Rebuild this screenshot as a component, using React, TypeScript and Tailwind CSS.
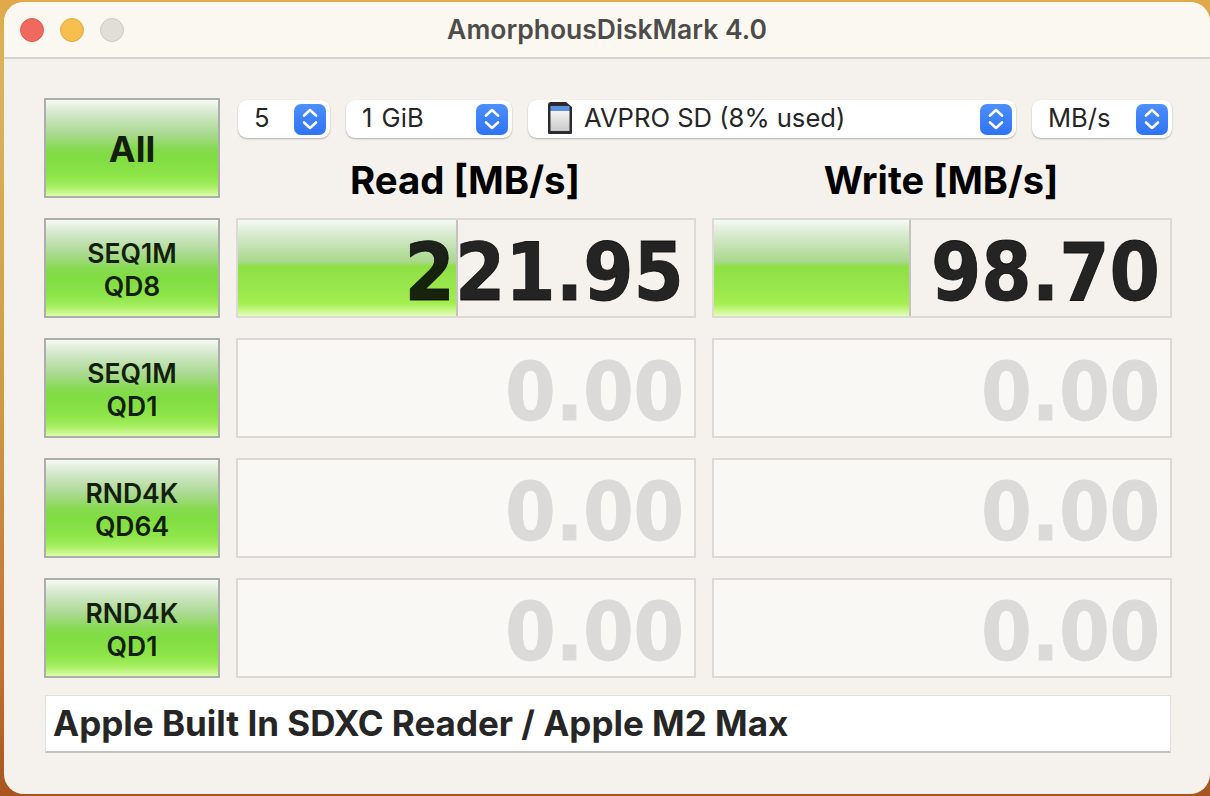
import React from 'react';

const Stepper = () => (
  <span className="flex h-[31px] w-[32px] items-center justify-center rounded-[7px] bg-gradient-to-b from-[#4d8ffb] to-[#2e73f6]">
    <svg width="20" height="26" viewBox="0 0 20 26" fill="none" stroke="#fff" strokeWidth="2.6" strokeLinecap="round" strokeLinejoin="round">
      <path d="M4 9.5 10 4l6 5.5" />
      <path d="M4 16.5 10 22l6-5.5" />
    </svg>
  </span>
);

const SdCard = () => (
  <svg width="24" height="32" viewBox="0 0 24 32" className="shrink-0">
    <path d="M3 0h15l6 5v26a1 1 0 0 1-1 1H1a1 1 0 0 1-1-1V3a3 3 0 0 1 3-3z" fill="#2b2b2d" />
    <rect x="2.5" y="4" width="19" height="5" fill="#5f8fe0" />
    <defs>
      <linearGradient id="sd" x1="0" y1="0" x2="0" y2="1">
        <stop offset="0" stopColor="#f4f4f4" />
        <stop offset="1" stopColor="#c9c9c9" />
      </linearGradient>
    </defs>
    <rect x="2.5" y="9" width="19" height="20" fill="url(#sd)" />
  </svg>
);

const Select = ({ className, children }: { className: string; children: React.ReactNode }) => (
  <div className={`flex h-[38px] items-center justify-between rounded-[9px] bg-white pr-[4px] text-[25.6px] text-[#262626] [word-spacing:2px] shadow-[0_1px_2px_rgba(0,0,0,0.28)] ${className}`}>
    {children}
    <Stepper />
  </div>
);

const buttonGradient =
  'bg-[linear-gradient(to_bottom,#f4f9f3_0%,#cfe6c4_16%,#a8d98e_36%,#84da4c_52%,#80dd42_62%,#8fe64a_80%,#a6ee60_90%,#dcfda8_100%)]';
const barGradient =
  'bg-[linear-gradient(to_bottom,#f6faf5_0%,#d6e9cc_16%,#a8d88c_44%,#8fe045_48%,#98e64c_70%,#a4ee50_87%,#e4fdb8_100%)]';

const TestButton = ({ lines, big }: { lines: string[]; big?: boolean }) => (
  <div className={`flex h-[100px] w-[176px] flex-col items-center justify-center border-2 border-[#adadad] text-[#131f0b] ${buttonGradient} ${big ? 'pt-[2px]' : 'pt-[4px]'}`}>
    {lines.map(line => (
      <div key={line} className={big ? 'text-[36px] leading-[42px] font-bold' : 'text-[26.5px] leading-[33px] font-semibold'}>
        {line}
      </div>
    ))}
  </div>
);

const Result = ({ value, bar }: { value?: string; bar?: number }) => (
  <div className={`relative flex h-[100px] w-[460px] items-center justify-end border-2 border-[#dcdad6] pt-[9px] pr-[10px] ${value ? 'bg-[#f5f2ee]' : 'bg-[#faf8f4]'}`}>
    {bar && (
      <div className={`absolute top-0 bottom-0 left-0 border-r-2 border-[#c4c3c0] ${barGradient}`} style={{ width: bar }} />
    )}
    <span
      className={`relative text-[80.5px] leading-none font-bold [-webkit-text-stroke:0.8px] ${value ? 'text-black/85' : 'text-[#dbdad8]'}`}
      style={{ fontFamily: '"DejaVu Sans Condensed", "DejaVu Sans", sans-serif', fontStretch: 'condensed' }}
    >
      {value ?? '0.00'}
    </span>
  </div>
);

const rows = [
  { lines: ['SEQ1M', 'QD8'], read: '221.95', readBar: 220, write: '98.70', writeBar: 197 },
  { lines: ['SEQ1M', 'QD1'] },
  { lines: ['RND4K', 'QD64'] },
  { lines: ['RND4K', 'QD1'] },
];

export default function App() {
  return (
    <div className="h-[796px] w-[1210px] overflow-hidden bg-[linear-gradient(to_bottom,#e0a94a_0%,#d9b45c_10%,#cf9a45_50%,#c2702f_85%,#a8541f_100%)] pt-[2px] pb-[2px] pl-[4px] font-['Inter','Noto_Sans',sans-serif]">
      <div className="flex h-[792px] w-[1206px] flex-col overflow-hidden rounded-[20px] bg-[#f5f2ee]">
        <div className="relative flex h-[57px] shrink-0 items-center justify-center border-b-2 border-[#d5d2cd] bg-[#fbf8f2]">
          <div className="absolute top-[16px] left-[16px] flex gap-[16px]">
            <span className="h-[24px] w-[24px] rounded-full border border-[#dd5c52] bg-[#f0695f]" />
            <span className="h-[24px] w-[24px] rounded-full border border-[#e3a63f] bg-[#f6bf50]" />
            <span className="h-[24px] w-[24px] rounded-full border border-[#ccc9c4] bg-[#e1ded9]" />
          </div>
          <div className="text-[26.5px] font-semibold text-[#4e4c49]">AmorphousDiskMark 4.0</div>
        </div>

        <div className="flex flex-col pt-[39px] pl-[40px]">
          <div className="flex gap-[16px]">
            <TestButton lines={['All']} big />
            <div className="flex flex-col">
              <div className="flex gap-[16px] pt-[2px] pl-[2px]">
                <Select className="w-[92px] pl-[16px]"><span className="pb-[2px]">5</span></Select>
                <Select className="w-[166px] pl-[16px]"><span className="pb-[2px]">1 GiB</span></Select>
                <Select className="w-[488px] pl-[20px]">
                  <span className="flex items-center gap-[12px] pb-[2px] [word-spacing:0px]"><SdCard />AVPRO SD (8% used)</span>
                </Select>
                <Select className="w-[140px] pl-[16px]"><span className="pb-[2px]">MB/s</span></Select>
              </div>
              <div className="flex gap-[16px] pt-[24px]">
                <div className="w-[460px] pr-[2px] text-center text-[38.4px] leading-[36px] font-bold text-black">Read [MB/s]</div>
                <div className="w-[460px] pr-[2px] text-center text-[38px] leading-[36px] font-bold text-black">Write [MB/s]</div>
              </div>
            </div>
          </div>

          <div className="flex flex-col gap-[20px] pt-[20px]">
            {rows.map(row => (
              <div key={row.lines.join()} className="flex gap-[16px]">
                <TestButton lines={row.lines} />
                <Result value={row.read} bar={row.readBar} />
                <Result value={row.write} bar={row.writeBar} />
              </div>
            ))}
          </div>

          <div className="mt-[17px] ml-[1px] flex h-[58px] w-[1126px] items-center border border-[#e2e0dc] border-b-2 border-b-[#c4c2be] bg-white pl-[7px] text-[35px] font-bold text-[#262626]">
            Apple Built In SDXC Reader / Apple M2 Max
          </div>
        </div>
      </div>
    </div>
  );
}
